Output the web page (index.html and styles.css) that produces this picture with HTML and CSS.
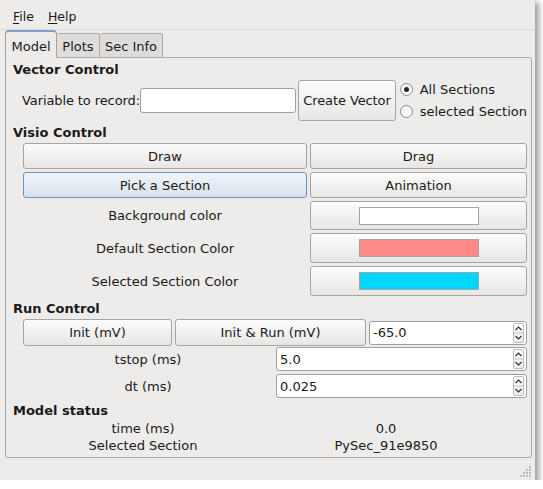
FILE: index.html
```html
<!DOCTYPE html>
<html>
<head>
<meta charset="utf-8">
<link rel="stylesheet" href="styles.css">
</head>
<body>
<div class="window">
  <div class="menubar">
    <span class="menu"><u>F</u>ile</span>
    <span class="menu"><u>H</u>elp</span>
  </div>
  <div class="tabs">
    <div class="tab tab-model active">Model</div>
    <div class="tab tab-plots">Plots</div>
    <div class="tab tab-sec">Sec Info</div>
  </div>
  <div class="panel">
    <div class="heading">Vector Control</div>
    <div class="vector-row">
      <span class="label">Variable to record:</span>
      <div class="lineedit"></div>
      <div class="button create">Create Vector</div>
      <div class="radios">
        <div class="radio-item"><span class="radio checked"></span>All Sections</div>
        <div class="radio-item"><span class="radio"></span>selected Section</div>
      </div>
    </div>

    <div class="heading">Visio Control</div>
    <div class="visio-grid">
      <div class="button">Draw</div>
      <div class="button">Drag</div>
      <div class="button active-btn">Pick a Section</div>
      <div class="button">Animation</div>
      <div class="form-label">Background color</div>
      <div class="button"><span class="swatch swatch-white"></span></div>
      <div class="form-label">Default Section Color</div>
      <div class="button"><span class="swatch swatch-red"></span></div>
      <div class="form-label">Selected Section Color</div>
      <div class="button"><span class="swatch swatch-cyan"></span></div>
    </div>

    <div class="heading">Run Control</div>
    <div class="run-row">
      <div class="button init">Init (mV)</div>
      <div class="button initrun">Init &amp; Run (mV)</div>
      <div class="spinbox short"><span class="spin-text">-65.0</span><span class="spin-arrows"><svg width="9" height="18" viewBox="0 0 9 18"><polyline points="1.5,6 4.5,3 7.5,6" fill="none" stroke="#333" stroke-width="1.2"/><line x1="0" y1="9" x2="9" y2="9" stroke="#c4c3c1" stroke-width="1"/><polyline points="1.5,12 4.5,15 7.5,12" fill="none" stroke="#333" stroke-width="1.2"/></svg></span></div>
    </div>
    <div class="param-grid">
      <div class="form-label">tstop (ms)</div>
      <div class="spinbox"><span class="spin-text">5.0</span><span class="spin-arrows"><svg width="9" height="18" viewBox="0 0 9 18"><polyline points="1.5,6 4.5,3 7.5,6" fill="none" stroke="#333" stroke-width="1.2"/><line x1="0" y1="9" x2="9" y2="9" stroke="#c4c3c1" stroke-width="1"/><polyline points="1.5,12 4.5,15 7.5,12" fill="none" stroke="#333" stroke-width="1.2"/></svg></span></div>
      <div class="form-label">dt (ms)</div>
      <div class="spinbox"><span class="spin-text">0.025</span><span class="spin-arrows"><svg width="9" height="18" viewBox="0 0 9 18"><polyline points="1.5,6 4.5,3 7.5,6" fill="none" stroke="#333" stroke-width="1.2"/><line x1="0" y1="9" x2="9" y2="9" stroke="#c4c3c1" stroke-width="1"/><polyline points="1.5,12 4.5,15 7.5,12" fill="none" stroke="#333" stroke-width="1.2"/></svg></span></div>
    </div>

    <div class="heading status-heading">Model status</div>
    <div class="status-grid">
      <div class="cell">time (ms)</div>
      <div class="cell">0.0</div>
      <div class="cell">Selected Section</div>
      <div class="cell">PySec_91e9850</div>
    </div>
  </div>
  <div class="statusbar">
    <svg class="grip" width="12" height="12" viewBox="0 0 12 12">
      <g fill="#bdbbb7">
        <rect x="9" y="0" width="2" height="2"/>
        <rect x="6" y="3" width="2" height="2"/><rect x="9" y="3" width="2" height="2"/>
        <rect x="3" y="6" width="2" height="2"/><rect x="6" y="6" width="2" height="2"/><rect x="9" y="6" width="2" height="2"/>
        <rect x="0" y="9" width="2" height="2"/><rect x="3" y="9" width="2" height="2"/><rect x="6" y="9" width="2" height="2"/><rect x="9" y="9" width="2" height="2"/>
      </g>
    </svg>
  </div>
</div>
</body>
</html>
```
FILE: styles.css
```css
* { box-sizing: border-box; }
html, body { margin: 0; padding: 0; background: #ffffff; }
body {
  font-family: "DejaVu Sans", "Liberation Sans", sans-serif;
  font-size: 13px;
  color: #1a1a1a;
}
.window {
  width: 535px;
  height: 480px;
  background: #edeceb;
  display: flex;
  flex-direction: column;
  box-shadow: 3px 3px 6px 1px rgba(0, 0, 0, 0.38);
}
.menubar {
  height: 30px;
  display: flex;
  align-items: center;
  padding: 4px 0 0 13px;
  gap: 14px;
  border-bottom: 1px solid #dddbd8;
  font-size: 12.5px;
}
.menu u { text-decoration: underline; text-underline-offset: 2px; }

.tabs {
  height: 27px;
  display: flex;
  align-items: flex-end;
  padding-left: 5px;
  position: relative;
  z-index: 2;
}
.tab {
  height: 24px;
  display: flex;
  align-items: center;
  justify-content: center;
  background: #dfdddb;
  border: 1px solid #aaa9a6;
  border-bottom: none;
  border-left: none;
  border-radius: 3px 3px 0 0;
  padding-top: 2px;
}
.tab-model { width: 52px; }
.tab-plots { width: 43px; }
.tab-sec { width: 63px; }
.tab.active {
  height: 28px;
  margin-bottom: -1px;
  background: #edeceb;
  border: 1px solid #a3a2a0;
  border-top: 2px solid #7d9fca;
  border-bottom: none;
  border-radius: 4px 4px 0 0;
  padding-top: 3px;
}

.panel {
  flex: 1;
  margin: 0 3px 0 5px;
  border: 1px solid #aaa9a6;
  border-radius: 0 3px 3px 3px;
  background: #edeceb;
  display: flex;
  flex-direction: column;
  padding: 4px 4px 0 7px;
}
.heading {
  font-weight: bold;
  height: 16px;
  line-height: 16px;
}
.vector-row {
  margin-top: 2px;
  margin-left: 9px;
  height: 41px;
  display: flex;
  align-items: center;
}
.label {
  white-space: nowrap;
  width: 119px;
  letter-spacing: -0.1px;
}
.lineedit {
  width: 157px;
  height: 25px;
  background: #fff;
  border: 1px solid #a09f9d;
  border-radius: 3px;
}
.button {
  display: flex;
  align-items: center;
  justify-content: center;
  background: linear-gradient(#fcfcfc, #e7e6e4);
  border: 1px solid #a6a5a2;
  border-radius: 3px;
  white-space: nowrap;
}
.button.create {
  width: 98px;
  height: 41px;
  margin-left: 2px;
  letter-spacing: -0.1px;
}
.radios {
  margin-left: 4px;
  display: flex;
  flex-direction: column;
  gap: 6px;
  margin-top: -1px;
}
.radio-item {
  display: flex;
  align-items: center;
  height: 16px;
  white-space: nowrap;
}
.radio {
  width: 13px;
  height: 13px;
  border-radius: 50%;
  border: 1px solid #8e8d8b;
  background: linear-gradient(#f2f2f1, #ffffff);
  margin-right: 7px;
  display: flex;
  align-items: center;
  justify-content: center;
}
.radio.checked::after {
  content: "";
  width: 5px;
  height: 5px;
  border-radius: 50%;
  background: #262626;
}

.vector-row + .heading { margin-top: 4px; }
.visio-grid {
  margin-top: 2px;
  margin-left: 10px;
  display: grid;
  grid-template-columns: 284px 217px;
  grid-template-rows: 26px 26px 29px 30px 30px;
  gap: 3px;
}
.active-btn {
  background: linear-gradient(#f0f4f9, #d8e2ed);
  border-color: #6f91ba;
}
.form-label {
  display: flex;
  align-items: center;
  justify-content: center;
  white-space: nowrap;
}
.swatch {
  width: 120px;
  height: 18px;
  border: 1px solid #a3a3a3;
}
.swatch-white { background: #ffffff; }
.swatch-red { background: #ff8888; }
.swatch-cyan { background: #00d7ff; }

.visio-grid + .heading { margin-top: 5px; }
.run-row {
  margin-top: 2px;
  margin-left: 10px;
  height: 27px;
  display: flex;
  align-items: center;
  gap: 3px;
}
.button.init { width: 149px; height: 27px; }
.button.initrun { width: 191px; height: 27px; }
.spinbox {
  height: 24px;
  background: #fff;
  border: 1px solid #a09f9d;
  border-radius: 3px;
  display: flex;
  align-items: center;
  justify-content: space-between;
  padding-left: 3px;
  padding-right: 2px;
}
.spinbox.short { width: 158px; }
.spin-arrows {
  width: 11px;
  height: 20px;
  border: 1px solid #bdbcb9;
  border-radius: 2px;
  display: flex;
  align-items: center;
  justify-content: center;
  background: linear-gradient(#ffffff, #eeedeb);
}
.spin-arrows svg { display: block; }
.param-grid {
  margin-top: 1px;
  margin-left: 10px;
  display: grid;
  grid-template-columns: 250px 251px;
  grid-template-rows: 24px 24px;
  column-gap: 3px;
  row-gap: 3px;
}
.status-heading { margin-top: 5px; }
.status-grid {
  margin-left: 10px;
  margin-top: 1px;
  display: grid;
  grid-template-columns: 240px 246px;
  grid-auto-rows: 17px;
}
.cell {
  text-align: center;
  line-height: 17px;
  white-space: nowrap;
}
.statusbar {
  height: 22px;
  display: flex;
  justify-content: flex-end;
  align-items: flex-end;
  padding: 0 3px 2px 0;
}
.grip { display: block; }
```
